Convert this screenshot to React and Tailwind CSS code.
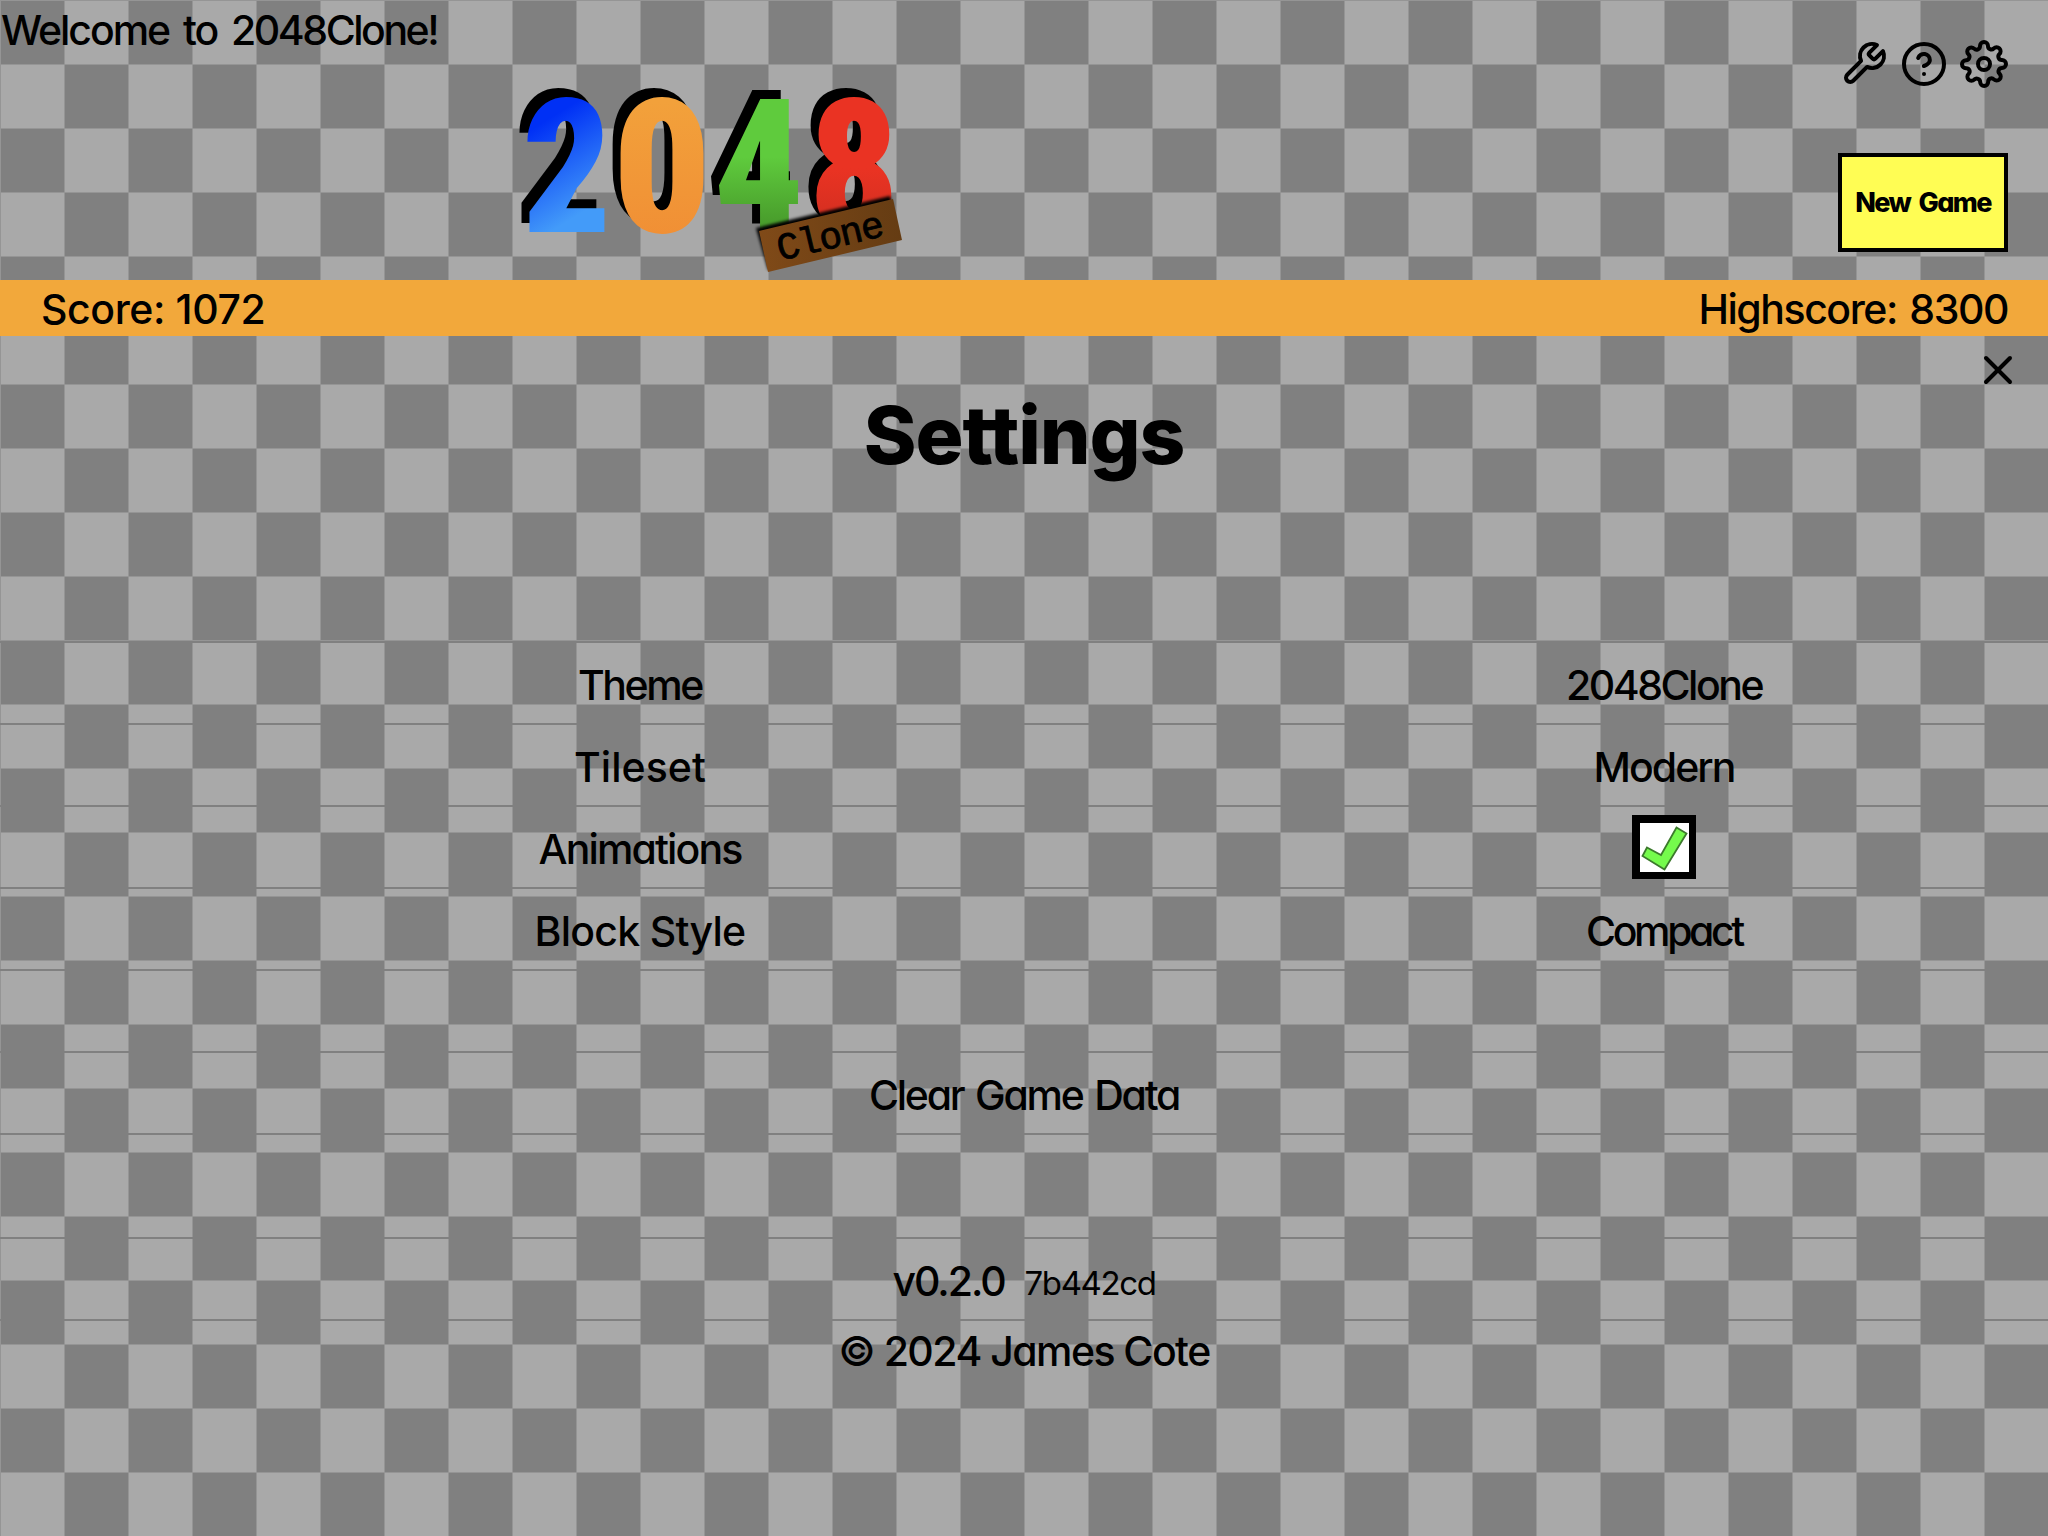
import { FiHelpCircle, FiSettings, FiTool, FiX } from "react-icons/fi";

const DIGITS = [
  { char: "2", x: 67, fill: "url(#blue)", stretch: 0.93 },
  { char: "0", x: 162, fill: "url(#orange)", stretch: 1.03 },
  { char: "4", x: 259, fill: "url(#green)", stretch: 0.95 },
  { char: "8", x: 354, fill: "url(#red)", stretch: 0.94 },
];

function Digits({ shadow }) {
  return DIGITS.map((d) => (
    <text
      key={d.char}
      transform={`translate(${d.x} 162) scale(${d.stretch} 1)`}
      fill={shadow ? "#000" : d.fill}
      textAnchor="middle"
      className="font-['Roboto',sans-serif] text-[188px] font-black [font-stretch:75%]"
    >
      {d.char}
    </text>
  ));
}

function Logo() {
  return (
    <svg viewBox="0 0 420 210" className="h-[210px] w-[420px] overflow-visible">
      <defs>
        <linearGradient id="blue" x1="0" y1="0" x2="0.25" y2="1">
          <stop offset="0.33" stopColor="#0030f5" />
          <stop offset="0.82" stopColor="#439bf9" />
        </linearGradient>
        <linearGradient id="orange" x1="0" y1="0" x2="0" y2="1">
          <stop offset="0.2" stopColor="#f2a13b" />
          <stop offset="1" stopColor="#f08a33" />
        </linearGradient>
        <linearGradient id="green" x1="0" y1="0" x2="0" y2="1">
          <stop offset="0.45" stopColor="#5fcb3d" />
          <stop offset="0.8" stopColor="#459529" />
        </linearGradient>
        <linearGradient id="red" x1="0" y1="0" x2="0" y2="1">
          <stop offset="0.5" stopColor="#ea3323" />
          <stop offset="0.85" stopColor="#c92d1f" />
        </linearGradient>
        <linearGradient id="wood" x1="0" y1="0" x2="1" y2="0">
          <stop offset="0" stopColor="#804a18" />
          <stop offset="1" stopColor="#653c13" />
        </linearGradient>
        <filter id="soft" x="-20%" y="-20%" width="140%" height="140%">
          <feGaussianBlur stdDeviation="1.6" />
        </filter>
      </defs>
      <g transform="translate(-8 -9.5)">
        <Digits shadow />
      </g>
      <Digits />
      <path d="M256 158L390 126L393 136L268 200Z" fill="#000" filter="url(#soft)" />
      <path d="M259 161L393 129L402 170L268 202Z" fill="url(#wood)" />
      <text
        transform="translate(333 178) rotate(-13.4)"
        textAnchor="middle"
        textLength="109"
        className="font-['Liberation_Mono',monospace] text-[38px]"
        stroke="#000"
        strokeWidth="0.8"
      >
        Clone
      </text>
    </svg>
  );
}

function Row({ label, labelTracking, children }) {
  return (
    <div className="flex h-[82px] border-b-2 border-[#808080]">
      <div className={`flex w-[1280px] items-center justify-center pt-1 ${labelTracking}`}>{label}</div>
      <div className="flex flex-1 items-center justify-center">{children}</div>
    </div>
  );
}

function Checkbox() {
  return (
    <div className="flex size-16 items-center justify-center bg-black">
      <svg viewBox="0 0 49 49" className="size-[49px] bg-white">
        <path
          d="M7 24.5L21 32L36.500 4.500L46.500 10.500L24.500 46.500L2.500 33Z"
          fill="#75fb4c"
          stroke="#3c7a2c"
          strokeWidth="1.8"
        />
      </svg>
    </div>
  );
}

export default function App() {
  return (
    <div className="h-[1536px] w-[2048px] overflow-hidden bg-[linear-gradient(to_right,#959595_1px,transparent_1px),linear-gradient(to_bottom,#959595_1px,transparent_1px),conic-gradient(#a9a9a9_25%,#808080_0_50%,#a9a9a9_0_75%,#808080_0)] bg-[length:64px_64px,64px_64px,128px_128px] font-['Inter',sans-serif] text-[41px] font-medium text-black [font-feature-settings:'cv11']">
      <header className="flex h-[280px] justify-between">
        <div className="flex w-[500px] pt-[5px] pl-px leading-[50px]">
          <span className="whitespace-nowrap tracking-[-0.05em] [word-spacing:5px]">
            Welcome to <span className="tracking-[-0.06em]">2048Clone!</span>
          </span>
        </div>
        <div className="flex-1 pt-[70px]">
          <Logo />
        </div>
        <div className="mr-10 flex w-[170px] flex-col items-end pt-10">
          <div className="flex gap-3">
            <FiTool size={48} />
            <FiHelpCircle size={48} />
            <FiSettings size={48} />
          </div>
          <button className="mt-[65px] flex h-[99px] w-[170px] items-center justify-center border-4 border-black bg-[#fffd54] pt-0.5 text-[27px] font-extrabold tracking-[-0.06em] [word-spacing:4px]">
            New Game
          </button>
        </div>
      </header>

      <div className="flex h-14 items-center justify-between bg-[#f2a83b] px-10 pt-1">
        <span className="pl-px tracking-[-0.01em]">Score: 1072</span>
        <span className="tracking-[-0.0355em] [word-spacing:3px]">Highscore: 8300</span>
      </div>

      <main>
        <div className="flex h-[58px] items-end justify-end pr-[26px]">
          <FiX size={48} />
        </div>
        <h1 className="pt-px text-center text-[80px] leading-[79px] font-extrabold tracking-[-0.014em]">Settings</h1>

        <div className="mt-[167px] border-t-2 border-[#808080] leading-none">
          <Row label="Theme" labelTracking="tracking-[-0.058em]">
            <span className="pt-1 tracking-[-0.0605em]">2048Clone</span>
          </Row>
          <Row label="Tileset" labelTracking="tracking-[0.001em]">
            <span className="pt-1 tracking-[-0.047em]">Modern</span>
          </Row>
          <Row label="Animations" labelTracking="tracking-[-0.046em]">
            <Checkbox />
          </Row>
          <Row label="Block Style" labelTracking="tracking-[-0.018em]">
            <span className="pt-1 tracking-[-0.0825em]">Compact</span>
          </Row>
          <div className="h-[82px] border-b-2 border-[#808080]" />
          <div className="flex h-[82px] items-center justify-center border-b-2 border-[#808080] pt-1 tracking-[-0.055em] [word-spacing:3px]">
            Clear Game Data
          </div>
        </div>

        <div className="mt-[102px] flex h-[84px] items-center justify-center gap-5 border-y-2 border-[#808080] pt-1 leading-none">
          <span className="tracking-[-0.05em]">v0.2.0</span>
          <span className="pt-1 text-[33px] font-normal tracking-[-0.0424em]">7b442cd</span>
        </div>
        <p className="mt-[5px] text-center leading-[50px] tracking-[-0.0375em]">© 2024 James Cote</p>
      </main>
    </div>
  );
}
